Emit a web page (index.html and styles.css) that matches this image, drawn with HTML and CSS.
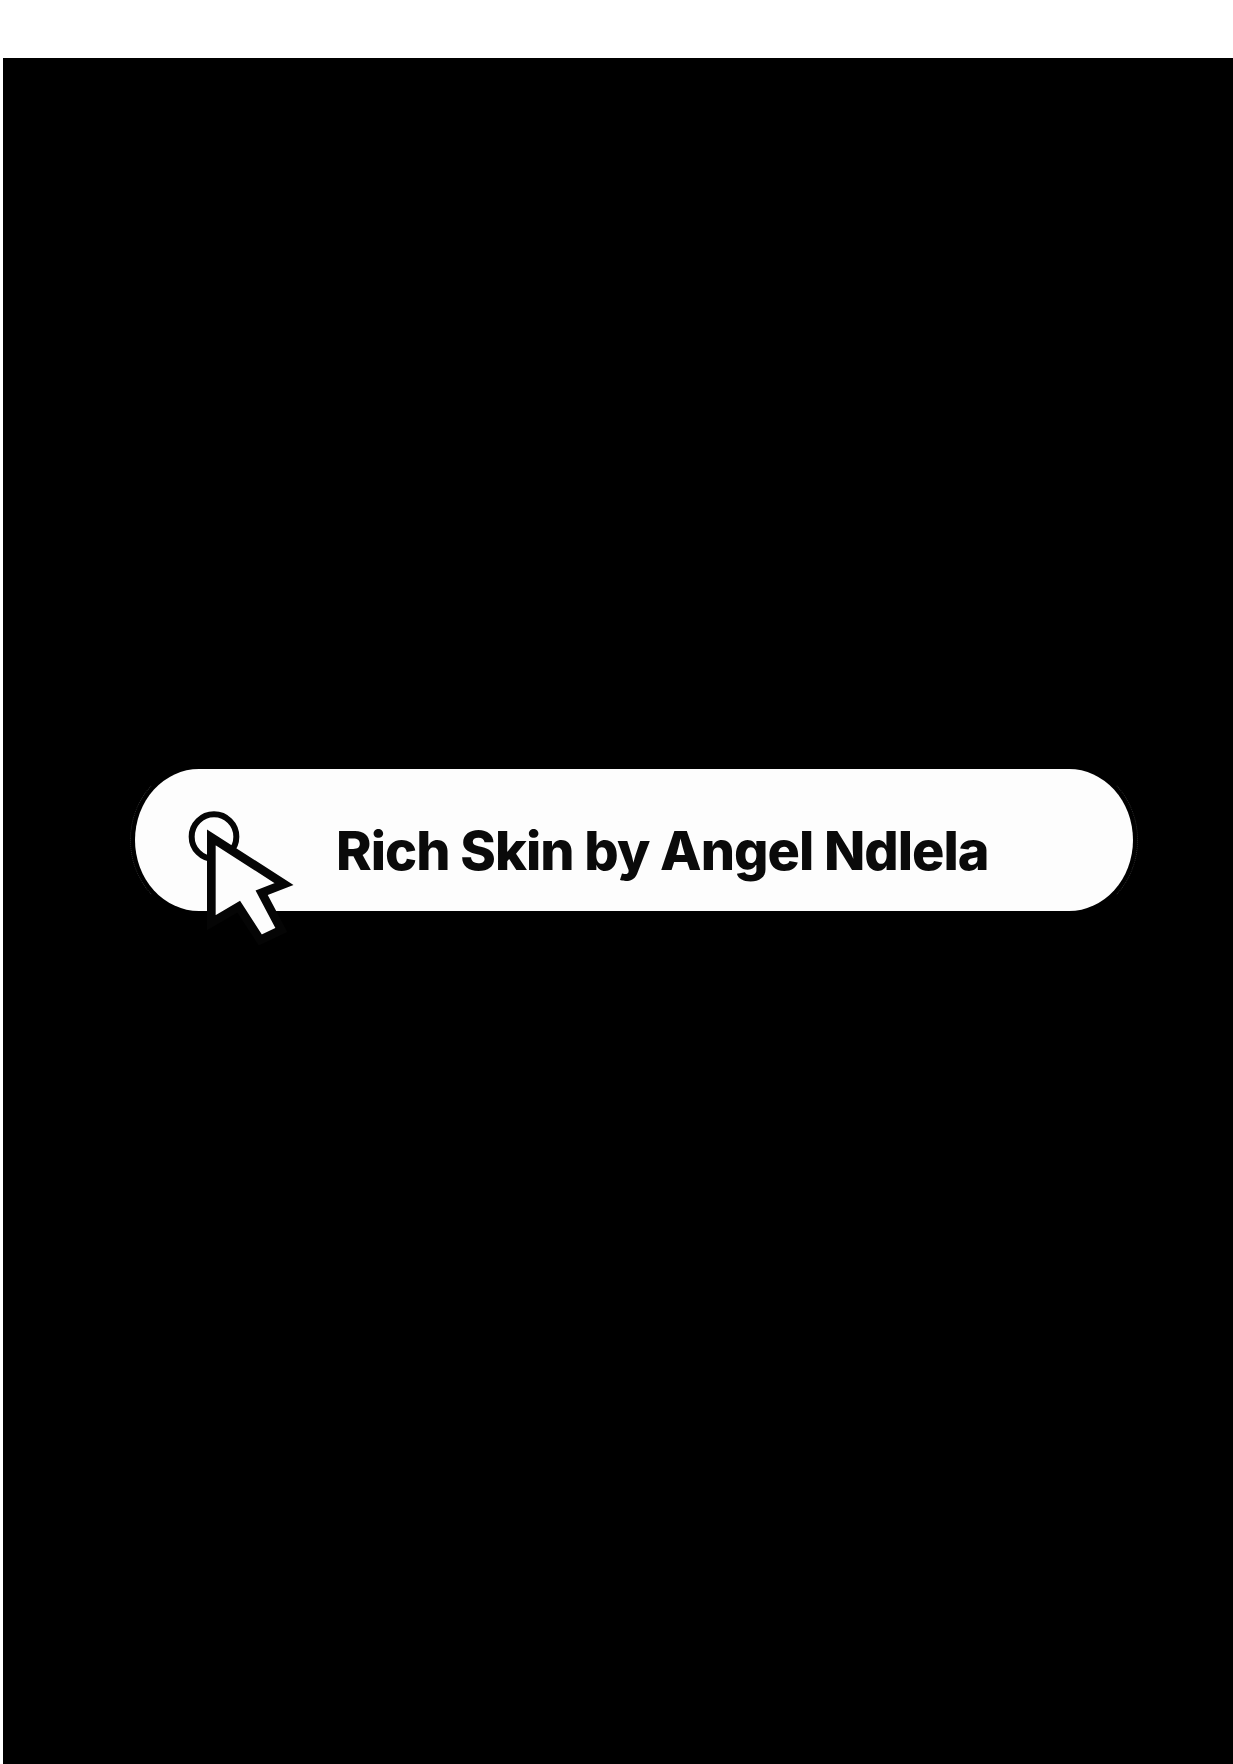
FILE: index.html
```html
<!DOCTYPE html>
<html lang="en">
<head>
<meta charset="utf-8">
<title>Rich Skin by Angel Ndlela</title>
<link rel="stylesheet" href="styles.css">
</head>
<body>
<main class="stage">
  <a class="pill" href="#">
    <svg class="cursor" viewBox="0 0 900 600" aria-hidden="true">
      <circle class="ring" cx="282" cy="260" r="67"/>
      <path class="arrow" d="M274 262 L492 402 L425 428 L484 540 L421 570 L356 470 L274 518 Z"/>
    </svg>
    <span class="label">Rich Skin by Angel Ndlela</span>
  </a>
</main>
</body>
</html>
```
FILE: styles.css
```css
html, body {
  margin: 0;
  padding: 0;
  background: #fff;
}
.stage {
  box-sizing: border-box;
  height: 1706px;
  margin: 58px 0 0 3px;
  padding: 711px 0 0 132px;
  background: #000;
  overflow: hidden;
}
.pill {
  position: relative;
  box-sizing: border-box;
  display: flex;
  align-items: center;
  width: 998px;
  height: 142px;
  padding: 21px 0 0 201px;
  border-radius: 64px / 71px;
  background: #fdfdfd;
  color: #0a0a0a;
  text-decoration: none;
}
.pill::before {
  content: "";
  position: absolute;
  inset: -5px;
  border: 1px dotted transparent;
  border-left-color: #2c2c2c;
  border-right-color: #2c2c2c;
  border-radius: 69px / 76px;
}
.label {
  font-family: Inter, "Liberation Sans", sans-serif;
  font-size: 54px;
  font-weight: 800;
  letter-spacing: -1px;
  line-height: 1;
  white-space: nowrap;
  filter: blur(0.5px);
}
.cursor {
  position: absolute;
  left: -15px;
  top: -19px;
  width: 300px;
  height: 200px;
  filter: blur(0.4px);
}
.ring {
  fill: none;
  stroke: #050505;
  stroke-width: 18;
}
.arrow {
  fill: #fdfdfd;
  stroke: #050505;
  stroke-width: 26;
  stroke-linejoin: miter;
  stroke-miterlimit: 2.5;
}
```
